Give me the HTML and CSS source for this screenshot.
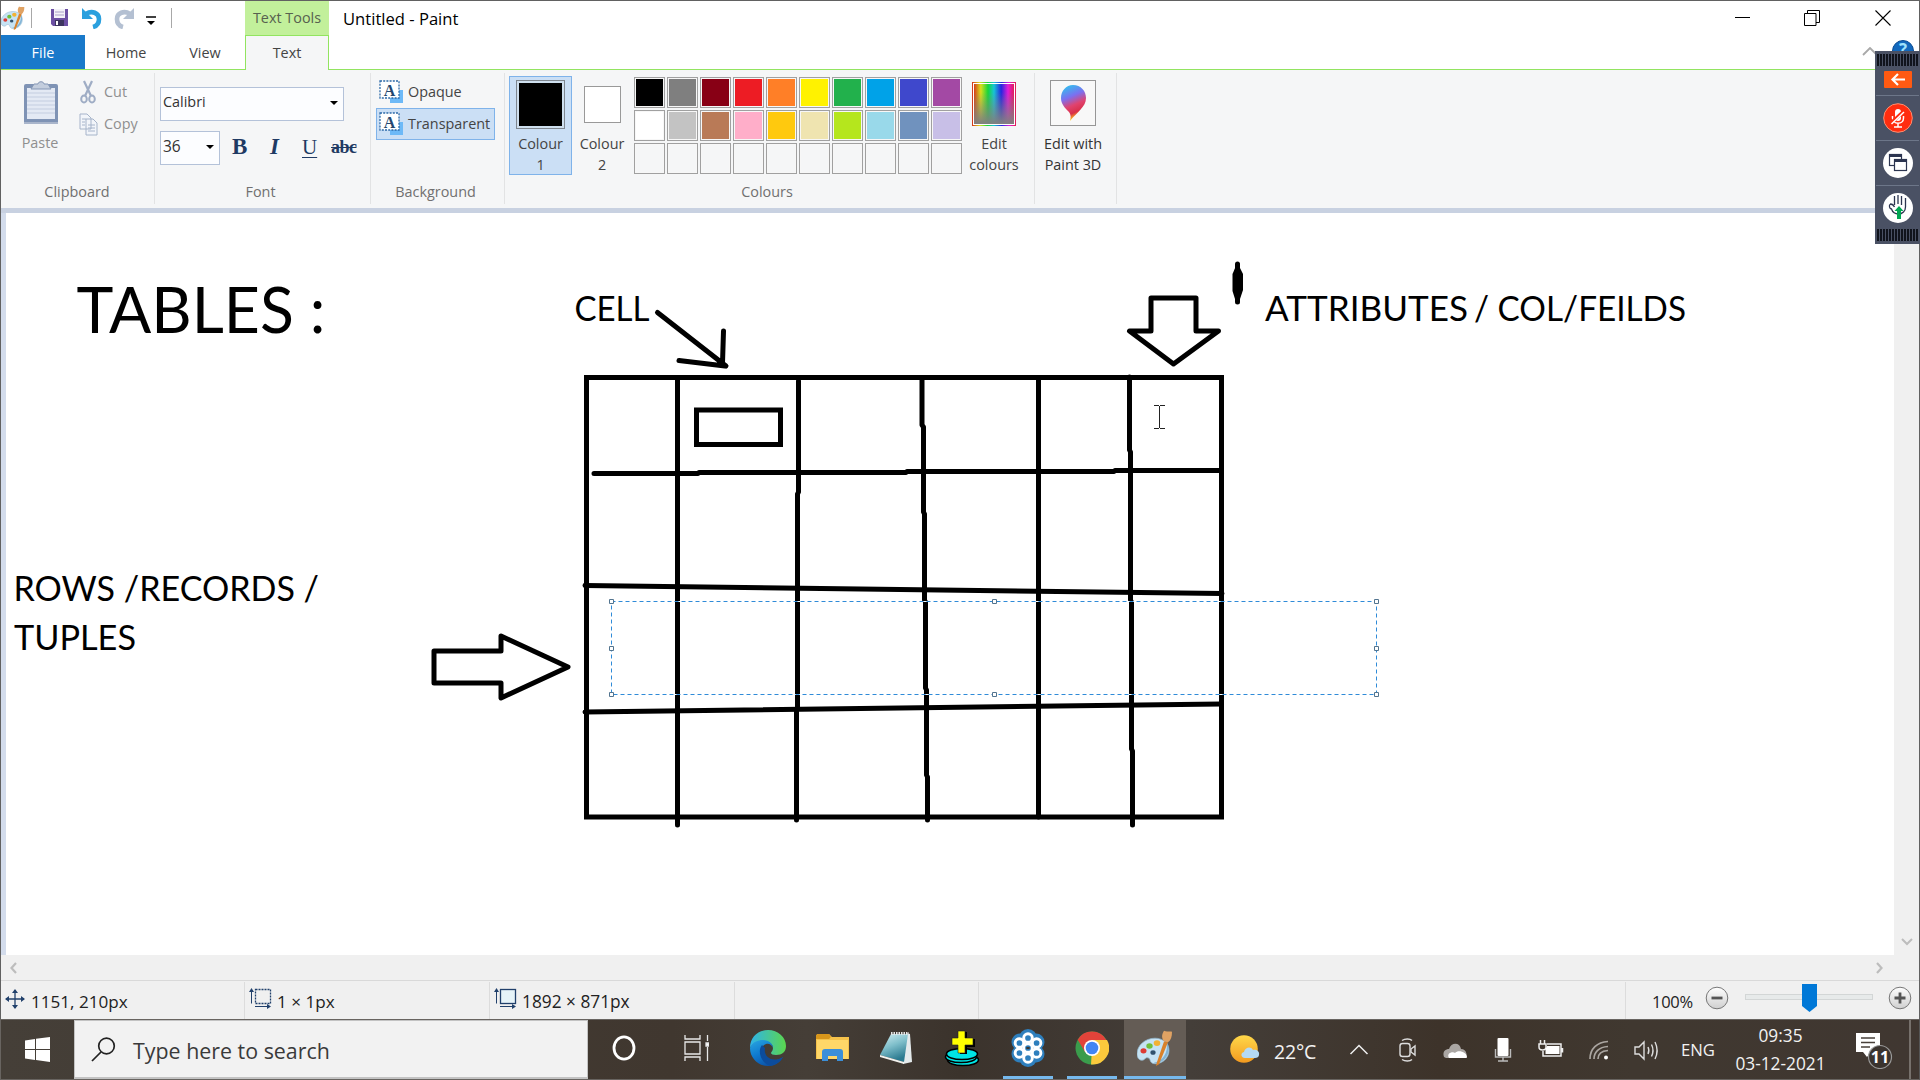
FILE: index.html
```html
<!DOCTYPE html>
<html lang="en">
<head>
<meta charset="utf-8">
<title>Untitled - Paint</title>
<link rel="stylesheet" href="styles.css">
</head>
<body>
<svg class="defs" width="0" height="0" aria-hidden="true">
  <defs>
    <symbol id="palette" viewBox="0 0 36 44">
      <path d="M18 10C8 10 0 19 0 29c0 5 2 8 5 8 3 0 3-4 6-3 3 1 1 5 5 7 8 2 16-6 16-16 0-9-6-15-14-15z" fill="#c6e3f4" stroke="#8fb3c9" stroke-width=".8"/>
      <path d="M30 15c4 9 1 21-8 25-3 1-5 1-5 0 9-2 14-12 13-25z" fill="#83b4d6"/>
      <ellipse cx="20" cy="16" rx="3.300" ry="3.600" fill="#f2b233"/>
      <ellipse cx="12.500" cy="19.500" rx="3.200" ry="3.400" fill="#6fbf3c"/>
      <ellipse cx="6.500" cy="25.500" rx="3" ry="3.200" fill="#dd3b34"/>
      <ellipse cx="16" cy="27.500" rx="2.600" ry="2.900" fill="#31526e"/>
      <path d="M27 14l4 1-9 27-3 2 1-5z" fill="#d9822b"/>
      <path d="M27 14c-3-5-2-9 0-13 3 2 5 0 8 1 0 6-1 10-4 13z" fill="#e0a263"/>
    </symbol>
    <symbol id="textbox" viewBox="0 0 26 24">
      <rect x="11" y="10" width="13" height="13" fill="#6db9f7"/>
      <rect x="1" y="1" width="19" height="17" fill="#fff" stroke="#2c6aa8" stroke-width="1.300" stroke-dasharray="2 1.200"/>
      <text x="10.500" y="16" text-anchor="middle" class="glyph">A</text>
    </symbol>
    <linearGradient id="rainbow"><stop offset="0" stop-color="#d43b1c"/><stop offset=".17" stop-color="#d8e01c"/><stop offset=".35" stop-color="#17d63a"/><stop offset=".5" stop-color="#17c4d6"/><stop offset=".68" stop-color="#2626e0"/><stop offset=".85" stop-color="#e01cd8"/><stop offset="1" stop-color="#e01c5a"/></linearGradient>
    <linearGradient id="greyfade" x2="0" y2="1"><stop offset=".2" stop-color="#808080" stop-opacity="0"/><stop offset="1" stop-color="#808080"/></linearGradient>
    <linearGradient id="drop" x2=".3" y2="1"><stop offset="0" stop-color="#20d2ee"/><stop offset=".4" stop-color="#7b70f0"/><stop offset=".65" stop-color="#e0436f"/><stop offset=".85" stop-color="#d92f4a"/><stop offset="1" stop-color="#ffc61a"/></linearGradient>
    <linearGradient id="edgeblue" x2=".6" y2="1"><stop offset="0" stop-color="#2aa7e0"/><stop offset=".5" stop-color="#0f7bd0"/><stop offset="1" stop-color="#0c4fa3"/></linearGradient>
    <linearGradient id="edgegreen"><stop offset="0" stop-color="#2fb3ea"/><stop offset="1" stop-color="#5bd64e"/></linearGradient>
    <linearGradient id="sun" x2="0" y2="1"><stop offset="0" stop-color="#ffd84a"/><stop offset="1" stop-color="#f39a1f"/></linearGradient>
    <linearGradient id="pad" x2=".4" y2="1"><stop offset="0" stop-color="#d5eff2"/><stop offset=".5" stop-color="#7fbfcb"/><stop offset="1" stop-color="#2b7a90"/></linearGradient>
    <linearGradient id="knob" x2="0" y2="1"><stop offset="0" stop-color="#fff"/><stop offset="1" stop-color="#cfcfcf"/></linearGradient>
  </defs>
</svg>

<div class="window">
  <header class="header">
    <div class="titlebar">
      <div class="quick">
        <svg class="q-app" width="24" height="24" viewBox="0 0 36 44" preserveAspectRatio="none"><use href="#palette"/></svg>
        <i class="q-sep"></i>
        <svg class="q-save" width="17" height="17" viewBox="0 0 17 17"><path d="M0 0h17v17H2l-2-2z" fill="#6c4fa3"/><path d="M3 0h11v9H3z" fill="#f3f1f8"/><path d="M4 3h9M4 6h9" stroke="#aaa0c8"/><path d="M4 11h9v6H4z" fill="#3d3560"/><path d="M5 12h2v4H5z" fill="#fff"/></svg>
        <svg class="q-undo" width="20" height="22" viewBox="0 0 20 22"><path d="M4 7c6-4 13-1 13 5 0 4-2 7-6 8" fill="none" stroke="#2ba0de" stroke-width="4.600"/><path d="M0 1v11h11z" fill="#2ba0de"/></svg>
        <svg class="q-redo" width="20" height="22" viewBox="0 0 20 22"><path d="M16 7C10 3 3 6 3 12c0 4 2 7 6 8" fill="none" stroke="#b4c0d2" stroke-width="4.600"/><path d="M20 1v11H9z" fill="#b4c0d2"/></svg>
        <svg class="q-more" width="10" height="10" viewBox="0 0 10 10"><path d="M0 1h10" stroke="#000" stroke-width="1.500"/><path d="M1 5h8L5 9z"/></svg>
        <i class="q-sep"></i>
      </div>
      <div class="context">Text Tools</div>
      <div class="title">Untitled - Paint</div>
      <div class="caption">
        <svg width="16" height="16" viewBox="0 0 16 16"><path d="M0 7.500h15" stroke="#000"/></svg>
        <svg width="16" height="16" viewBox="0 0 16 16" fill="none" stroke="#000"><path d="M.5 3.500h11.500v12H.5zM3.500 3.500v-3h12v12h-3.500"/></svg>
        <svg width="16" height="16" viewBox="0 0 16 16"><path d="M.5.5l15 15M15.500.5l-15 15" stroke="#000" stroke-width="1.100"/></svg>
      </div>
    </div>
    <nav class="tabs">
      <span class="tab tab-file">File</span>
      <span class="tab tab-home">Home</span>
      <span class="tab tab-view">View</span>
      <span class="tab tab-text">Text</span>
      <span class="tab-fill">
        <svg width="16" height="9" viewBox="0 0 16 9"><path d="M1 8l7-7 7 7" fill="none" stroke="#a9a9a9" stroke-width="1.800"/></svg>
        <svg width="22" height="22" viewBox="0 0 22 22"><circle cx="11" cy="11" r="10.500" fill="#1268bd" stroke="#0b4c92"/><text x="11" y="16" text-anchor="middle" class="help">?</text></svg>
      </span>
    </nav>
  </header>

  <section class="ribbon">
    <div class="group g-clip">
      <div class="body">
        <div class="paste">
          <svg width="36" height="44" viewBox="0 0 36 44"><rect x="1" y="3" width="34" height="40" rx="2" fill="#7f93b5"/><path d="M4 7h28v31H4z" fill="#e3e9f4"/><path d="M4 12h28M4 16h28M4 20h28M4 24h28M4 28h28M4 32h28" stroke="#c3cde0"/><path d="M8 8l3-5h4c0-3 6-3 6 0h4l3 5z" fill="#c3cddd" stroke="#8597b5"/><path d="M1 42h34" stroke="#a9b5cb" stroke-width="2"/></svg>
          <span>Paste</span>
        </div>
        <div class="cutcopy">
          <div class="mini"><svg width="19" height="24" viewBox="0 0 19 24" fill="none" stroke="#9fadc5"><path d="M5 1l7 15M13 1L6 16" stroke-width="2.200"/><ellipse cx="5" cy="19" rx="2.800" ry="3.500" stroke-width="2"/><ellipse cx="13" cy="19" rx="2.800" ry="3.500" stroke-width="2"/></svg>Cut</div>
          <div class="mini"><svg width="19" height="24" viewBox="0 0 19 24" fill="#f2f5fa" stroke="#a6b4ca"><path d="M1 2h7l4 4v11H1zM7 7h7l4 4v12H7z"/><path d="M3 7h4M3 10h3M3 13h3M9 13h7M9 16h7M9 19h7"/></svg>Copy</div>
        </div>
      </div>
      <div class="label">Clipboard</div>
    </div>
    <div class="group g-font">
      <div class="body">
        <div class="combo family">Calibri<i class="arrow"></i></div>
        <div class="fontrow">
          <div class="combo size">36<i class="arrow"></i></div>
          <b class="f-b">B</b><b class="f-i">I</b><span class="f-u">U</span><b class="f-s">abc</b>
        </div>
      </div>
      <div class="label">Font</div>
    </div>
    <div class="group g-back">
      <div class="body">
        <div class="option"><svg width="26" height="24"><use href="#textbox"/></svg>Opaque</div>
        <div class="option on"><svg width="26" height="24"><use href="#textbox"/></svg>Transparent</div>
      </div>
      <div class="label">Background</div>
    </div>
    <div class="group g-colours">
      <div class="body">
        <div class="pick on"><i class="chip chip-1"></i>Colour<br>1</div>
        <div class="pick second"><i class="chip chip-2"></i>Colour<br>2</div>
        <div class="swatches">
          <i style="background:#000"></i><i style="background:#7f7f7f"></i><i style="background:#880015"></i><i style="background:#ed1c24"></i><i style="background:#ff7f27"></i><i style="background:#fff200"></i><i style="background:#22b14c"></i><i style="background:#00a2e8"></i><i style="background:#3f48cc"></i><i style="background:#a349a4"></i>
          <i style="background:#fff"></i><i style="background:#c3c3c3"></i><i style="background:#b97a57"></i><i style="background:#ffaec9"></i><i style="background:#ffc90e"></i><i style="background:#efe4b0"></i><i style="background:#b5e61d"></i><i style="background:#99d9ea"></i><i style="background:#7092be"></i><i style="background:#c8bfe7"></i>
          <i></i><i></i><i></i><i></i><i></i><i></i><i></i><i></i><i></i><i></i>
        </div>
        <div class="tool t-edit"><svg width="44" height="44" viewBox="0 0 44 44"><rect x=".5" y=".5" width="43" height="43" fill="#fff" stroke="url(#rainbow)"/><rect x="2" y="2" width="40" height="40" fill="url(#rainbow)"/><rect x="2" y="2" width="40" height="40" fill="url(#greyfade)"/></svg>Edit<br>colours</div>
      </div>
      <div class="label">Colours</div>
    </div>
    <div class="group g-3d">
      <div class="body">
        <div class="tool"><svg width="46" height="46" viewBox="0 0 46 46"><rect x=".5" y=".5" width="45" height="45" fill="#f8f8f8" stroke="#969696"/><path d="M23 5c8 0 13 6 13 13 0 9-9 14-16 23 1-4 1-6-1-9-4-4-8-8-8-14 0-7 5-13 12-13z" fill="url(#drop)"/></svg>Edit with<br>Paint 3D</div>
      </div>
    </div>
  </section>

  <main class="workspace">
    <svg class="canvas" width="1888" height="742" viewBox="6 213 1888 742">
      <g class="ink">
        <rect x="586.500" y="377.500" width="635" height="439.500"/>
        <rect x="696.500" y="410" width="84" height="34.500"/>
      </g>
      <g class="ink round">
        <path d="M1151 298h45v33h22.500L1173.500 364 1129.500 331H1151z"/>
        <path d="M434 651h67v-15l67 31-67 31v-15h-67z"/>
        <path d="M677.500 378V825M798.500 381V492L797.500 494V708L796.500 710V820M922 378V425L923.500 427V512L924.500 514V600L925.500 602V688L926.500 690V775L927.500 777V820M1038.500 378V817M1129.500 377V450L1130.500 452V600L1131.500 602V749L1132.500 751V825"/>
        <path d="M594 473.500H698L699 472.500H906L907 471.500H1114L1115 470.500H1220"/>
        <path d="M585 585.500L1222 593.500M585 712L1221 704"/>
        <path d="M657.500 312.500L726 366M679 360.500L725 366M723.500 331L722.500 363"/>
        <path d="M1237.500 264V302"/>
      </g>
      <path d="M1232.500 274l3-7h4l3.500 7v16l-3 9h-5l-2.500-8z"/>
      <g class="written">
        <text x="76.500" y="333" font-size="64" textLength="249" lengthAdjust="spacingAndGlyphs">TABLES :</text>
        <text x="574.500" y="321" font-size="34.500" textLength="75" lengthAdjust="spacingAndGlyphs">CELL</text>
        <text x="1265" y="321" font-size="34.500" textLength="203" lengthAdjust="spacingAndGlyphs">ATTRIBUTES</text>
        <text x="1474" y="321" font-size="34.500" textLength="212" lengthAdjust="spacingAndGlyphs">/ COL/FEILDS</text>
        <text x="13.500" y="600.500" font-size="34.500" textLength="305.500" lengthAdjust="spacingAndGlyphs">ROWS /RECORDS /</text>
        <text x="14" y="649.500" font-size="34.500" textLength="122" lengthAdjust="spacingAndGlyphs">TUPLES</text>
      </g>
      <rect x="611.500" y="601.500" width="765" height="93" fill="none" stroke="#fff"/>
      <rect x="611.500" y="601.500" width="765" height="93" fill="none" stroke="#2f8bd8" stroke-dasharray="4 3"/>
      <path class="handles" d="M609.500 599.500h4v4h-4zM992.500 599.500h4v4h-4zM1374.500 599.500h4v4h-4zM609.500 646.500h4v4h-4zM1374.500 646.500h4v4h-4zM609.500 692.500h4v4h-4zM992.500 692.500h4v4h-4zM1374.500 692.500h4v4h-4z"/>
      <path d="M1154 405.500h5M1160 405.500h5M1159.500 406v22M1154 428.500h5M1160 428.500h5" stroke="#222" fill="none"/>
    </svg>
    <div class="vscroll"><svg width="14" height="9" viewBox="0 0 14 9"><path d="M2 2l5 5 5-5" fill="none" stroke="#bdbdbd" stroke-width="2"/></svg></div>
    <div class="hscroll">
      <svg width="9" height="14" viewBox="0 0 9 14"><path d="M7 2L2.500 7 7 12" fill="none" stroke="#bdbdbd" stroke-width="2.200"/></svg>
      <svg width="9" height="14" viewBox="0 0 9 14"><path d="M2 2l4.500 5L2 12" fill="none" stroke="#bdbdbd" stroke-width="2.200"/></svg>
    </div>
  </main>

  <footer class="status">
    <div class="cell c1"><svg width="20" height="20" viewBox="0 0 20 20"><path d="M10 1v18M1 10h18" stroke="#21406b" stroke-width="1.300"/><path d="M10 0l3 4H7zM10 20l3-4H7zM0 10l4-3v6zM20 10l-4-3v6z" fill="#21406b"/></svg>1151, 210px</div>
    <div class="cell c2"><svg width="23" height="21" viewBox="0 0 23 21" fill="none" stroke="#21406b"><rect x="6.500" y="1.500" width="15" height="14" stroke-dasharray="2 1" stroke-width="1.300"/><path d="M2.500 2v13.500M6 18.500h13"/><path d="M2.500 0l2.500 4H0zM22 18.500l-4-2.500v5z" fill="#21406b" stroke="none"/></svg>1 × 1px</div>
    <div class="cell c3"><svg width="23" height="21" viewBox="0 0 23 21" fill="none" stroke="#21406b"><rect x="6.500" y="1.500" width="15" height="14" fill="#e6f3f8" stroke-width="1.300"/><path d="M2.500 2v13.500M6 18.500h13"/><path d="M2.500 0l2.500 4H0zM22 18.500l-4-2.500v5z" fill="#21406b" stroke="none"/></svg>1892 × 871px</div>
    <div class="cell c4"></div>
    <div class="cell c5"></div>
    <div class="zoom">
      <span>100%</span>
      <svg width="24" height="24" viewBox="0 0 24 24"><circle cx="12" cy="12" r="10.800" fill="url(#knob)" stroke="#777"/><path d="M6.500 12h11" stroke="#555" stroke-width="2.800"/></svg>
      <svg class="slider" width="128" height="30" viewBox="0 0 128 30"><rect x=".5" y="11.500" width="127" height="5" fill="#e7eaea" stroke="#d3d6d6"/><path d="M57 1h15v22l-7.500 6L57 23z" fill="#0078d7"/></svg>
      <svg width="24" height="24" viewBox="0 0 24 24"><circle cx="12" cy="12" r="10.800" fill="url(#knob)" stroke="#777"/><path d="M6.500 12h11M12 6.500v11" stroke="#555" stroke-width="2.800"/></svg>
    </div>
  </footer>
</div>

<div class="taskbar">
  <div class="start"><svg width="25" height="25" viewBox="0 0 25 25"><path d="M0 3.500l10-1.600v10H0zM11 1.700L25 0v11.900H11zM0 13h10v9.900L0 21.500zM11 13h14v12l-14-1.900z" fill="#fff"/></svg></div>
  <div class="search"><svg width="25" height="25" viewBox="0 0 25 25" fill="none" stroke="#222" stroke-width="1.700"><circle cx="15.500" cy="9" r="7.800"/><path d="M10 15L1 24"/></svg><span>Type here to search</span></div>
  <div class="apps">
    <div class="app"><svg width="24" height="26" viewBox="0 0 24 26"><ellipse cx="12" cy="13" rx="10" ry="11.200" fill="none" stroke="#fff" stroke-width="2.800"/></svg></div>
    <div class="app a-view"><svg width="25" height="26" viewBox="0 0 25 26" fill="none" stroke="#e8e8e8" stroke-width="1.300"><path d="M1 0v4h15V0M1 26v-4h15v4M1 7h15v12H1zM23.500 0v6M23.500 12v14"/><path d="M22 8h3v3h-3z" fill="#fff"/></svg></div>
    <div class="app"><svg width="38" height="38" viewBox="0 0 38 38"><path d="M1 19C1 8 9 1 19 1s18 7 18 16c0 6-4 9-10 9-3 0-5-1-5-2s2-2 2-5c0-4-4-7-9-7C9 12 3 15 1 19z" fill="url(#edgegreen)"/><path d="M1 19c2-6 8-8 13-8 6 0 10 4 10 8-1-3-4-5-7-4-7 2-5 14 5 16 5 1 9-1 12-3-3 6-9 9-15 9C9 37 1 29 1 19z" fill="url(#edgeblue)"/><path d="M13 16c-5 6-1 18 8 21 6-1 10-4 13-9-9 6-20 1-18-9z" fill="#0c4c9c"/></svg></div>
    <div class="app"><svg width="33" height="28" viewBox="0 0 33 28"><path d="M0 3c0-2 1-3 2-3h11l3 3h17v22H0z" fill="#f5c24b"/><path d="M0 4V2c0-1 1-2 2-2h11l2 3-2 2H0z" fill="#d8961b"/><path d="M1 6h31v19H1z" fill="#ffd768"/><path d="M6 27V18c0-2 1-3 3-3h15c2 0 3 1 3 3v9h-6v-5h-9v5z" fill="#3b8fd8"/></svg></div>
    <div class="app"><svg width="34" height="34" viewBox="0 0 34 34"><path d="M27 2l4 1 2 28-9 2z" fill="#e4eaec"/><path d="M12 3l17 0-4 28L1 24z" fill="url(#pad)"/><path d="M1 24l24 7v2L1 26z" fill="#f2f2ee"/><path d="M12 2.500h18" stroke="#e6e6e6" stroke-width="3" stroke-dasharray="1.500 1"/></svg></div>
    <div class="app a-plus"><svg width="36" height="38" viewBox="0 0 36 38"><g fill="#00e5e5" stroke="#000" stroke-width="1.600"><ellipse cx="19" cy="31" rx="15.500" ry="5.500"/><ellipse cx="17" cy="28" rx="15.500" ry="5.500"/><ellipse cx="18" cy="25" rx="15.500" ry="5.500"/></g><path d="M16 3h7v7h8v8h-8v7h-7z" fill="#000"/><path d="M14 2h7v7h8v7h-8v8h-7v-8H8V9h6z" fill="#ff0" stroke="#222" stroke-width=".6"/></svg></div>
    <div class="app run shift"><svg width="34" height="38" viewBox="0 0 34 38"><g fill="#2e7fbd"><circle cx="17" cy="9" r="9"/><circle cx="9" cy="13" r="8.500"/><circle cx="25" cy="13" r="8.500"/><circle cx="9" cy="25" r="8.500"/><circle cx="25" cy="25" r="8.500"/><circle cx="17" cy="29" r="9"/></g><g fill="none" stroke="#fff" stroke-width="2.900"><circle cx="17" cy="9" r="4.300"/><circle cx="25.600" cy="14" r="4.300"/><circle cx="25.600" cy="24" r="4.300"/><circle cx="17" cy="29" r="4.300"/><circle cx="8.400" cy="24" r="4.300"/><circle cx="8.400" cy="14" r="4.300"/><circle cx="17" cy="19" r="4.300"/></g></svg></div>
    <div class="app run"><svg width="34" height="34" viewBox="0 0 34 34"><circle cx="17" cy="17" r="16.500" fill="#3a9c4c"/><path d="M17 17l-1 16.500A16.500 16.500 0 0 0 32 9H17z" fill="#fbc93c"/><path d="M17 17L2.700 8.700A16.500 16.500 0 0 1 31.400 9H17z" fill="#e2433a"/><path d="M2.700 8.700L10 21l7-12z" fill="#e2433a"/><circle cx="17" cy="17" r="8" fill="#fff"/><circle cx="17" cy="17" r="6.300" fill="#4285f4"/></svg></div>
    <div class="app run active"><svg width="36" height="36" viewBox="0 0 36 44" preserveAspectRatio="none"><use href="#palette"/></svg></div>
  </div>
  <div class="tray">
    <div class="w-icon"><svg width="30" height="30" viewBox="0 0 30 30"><circle cx="14" cy="14" r="13.800" fill="url(#sun)"/><path d="M15 23c-4 0-5-5-1-6 1-5 7-6 9-2 3-1 7 1 6 5 0 2-2 3-4 3z" fill="#b4daf5"/></svg></div>
    <div class="w-text">22°C</div>
    <svg width="48" height="30" viewBox="0 0 48 30" fill="none" stroke="#eee" stroke-width="1.500"><path d="M15.500 19L24 10.500 32.500 19"/></svg>
    <svg width="48" height="30" viewBox="0 0 48 30" fill="none" stroke="#ddd" stroke-width="1.400"><rect x="17" y="8.500" width="10" height="13" rx="2.500"/><path d="M28 14l4-3v9l-4-3zM19 5.500c3-2 8-2 10 0M19 24.500c3 2 8 2 10 0"/></svg>
    <svg width="48" height="30" viewBox="0 0 48 30"><path d="M13 22c-2-6 2-8 5-8 2-7 11-7 12 0 6 0 7 8 4 9H15z" fill="#aaa6a3"/><path d="M18 23c-3-5 4-7 6-5 3-4 12-1 12 4 0 1-1 1-2 1z" fill="#fff"/></svg>
    <svg width="48" height="30" viewBox="0 0 48 30"><rect x="18.500" y="3" width="11" height="18" rx="1" fill="#fff"/><path d="M16.500 14v8h15v-8M24 22v4M19 26h10" fill="none" stroke="#bbb" stroke-width="1.400"/></svg>
    <svg width="48" height="30" viewBox="0 0 48 30" fill="none" stroke="#eee" stroke-width="1.500"><path d="M20 9h14v12H16v-5M35.500 13v4.500M12 9h7v3c0 4-7 4-7 0zM13.500 5v4M17.500 5v4"/><path d="M20 11h12.500v8H18.500v-5z" fill="#fff" stroke="none"/></svg>
    <svg width="48" height="30" viewBox="0 0 48 30" fill="none" stroke="#aaa5a0" stroke-width="1.700"><path d="M15 24C15 14 22 7 33 6.500M19 24c0-7 5-12 14-12.500M23 24c0-5 3-8 10-8.500" /><circle cx="31" cy="22.500" r="2" fill="#fff" stroke="none"/></svg>
    <svg width="48" height="30" viewBox="0 0 48 30" fill="none" stroke="#ddd" stroke-width="1.400"><path d="M12 12h4l5-5v17l-5-5h-4zM25 12c1 2 1 5 0 7M28.500 9.500c2 4 2 8 0 12M32 7c3 6 3 11 0 17"/></svg>
    <div class="lang">ENG</div>
    <div class="clock">09:35<br>03-12-2021</div>
    <div class="notify"><svg width="38" height="38" viewBox="0 0 38 38"><path d="M0 2h24v19h-9l-4 5-4-5H0z" fill="#fff"/><path d="M5 7h14M5 11.500h14M5 16h9" stroke="#48403a" stroke-width="1.500"/><circle cx="24" cy="26" r="11.500" fill="#3a332e" stroke="#999" stroke-width="1.200"/><text x="24" y="32" text-anchor="middle" class="count">11</text></svg></div>
    <i class="peek"></i>
  </div>
</div>

<aside class="dock">
  <i class="grip"></i>
  <div class="d-item d-back"><svg width="28" height="17" viewBox="0 0 28 17"><rect width="28" height="17" rx="1" fill="#ff5a12"/><path d="M21 8.500H9M14 3L8.500 8.500 14 14" fill="none" stroke="#fff" stroke-width="2.200"/></svg></div>
  <div class="d-item"><svg width="30" height="30" viewBox="0 0 30 30"><circle cx="15" cy="15" r="14.300" fill="#ff2d0f" stroke="#ff8e70"/><rect x="12" y="6" width="6" height="12" rx="3" fill="#fff"/><path d="M9.500 13v2c0 7 11 7 11 0v-2M15 20v4M11 24h8" fill="none" stroke="#fff" stroke-width="1.500"/><path d="M8 20L21 8" stroke="#ff2d0f" stroke-width="3.500"/><path d="M8.500 21L21 9" stroke="#fff" stroke-width="1.500"/></svg></div>
  <div class="d-item"><svg width="30" height="30" viewBox="0 0 30 30"><circle cx="15" cy="15" r="15" fill="#fff"/><g fill="#fff" stroke="#2c3550" stroke-width="1.200"><rect x="6.500" y="6.500" width="12" height="11"/><path d="M6.500 8h12" stroke-width="2"/><rect x="11.500" y="11.500" width="12" height="11"/><path d="M11.500 13h12" stroke-width="2"/></g></svg></div>
  <div class="d-item"><svg width="30" height="30" viewBox="0 0 30 30"><circle cx="15" cy="15" r="15" fill="#fff"/><path d="M11.500 12V3M15 11V2M18.500 12V3M22.500 5v9c0 4-3 7-7 7s-6-2-7-5c-2 0-3-4-1-5 2 0 3 1 4 3" fill="none" stroke="#2c3550" stroke-width="1.300"/><path d="M14 26v-8h-2.500l4.500-5 4.500 5H18v8z" fill="#00a651"/></svg></div>
  <i class="grip"></i>
</aside>
</body>
</html>
```
FILE: styles.css
```css
* { box-sizing: border-box; }
body {
  margin: 0;
  width: 1920px;
  height: 1080px;
  overflow: hidden;
  position: relative;
  background: #fff;
  color: #444;
  font: 14.4px/22px "Open Sans", "Noto Sans", sans-serif;
}
svg { display: block; flex: none; }
i { display: block; font-style: normal; }
.defs { position: absolute; }

.window {
  height: 1019px;
  display: flex;
  flex-direction: column;
  border: 1px solid #616161;
  border-width: 1px 1px 0;
}

/* title row and tabs */
.titlebar { display: flex; height: 34px; }
.quick { width: 244px; display: flex; align-items: center; padding-bottom: 1px; }
.q-sep { width: 1px; height: 20px; background: #a8a8a8; margin-left: 6px; }
.q-save { margin-left: 19px; }
.q-undo { margin-left: 14px; }
.q-redo { margin-left: 12px; }
.q-more { margin: 6px 0 0 12px; }
.q-more + .q-sep { margin-left: 15px; }
.context { width: 84px; background: #c2f09b; color: #57614f; text-align: center; line-height: 34px; }
.title { margin-left: 14px; font-size: 16.600px; line-height: 35px; color: #000; flex: 1; }
.caption { display: flex; gap: 54px; padding: 9px 28px 0 0; }
.caption svg:nth-child(2) { margin-left: -1px; margin-right: 1px; }
.tabs { display: flex; height: 35px; line-height: 35px; text-align: center; }
.tab, .tab-fill { border-bottom: 1px solid #92e460; }
.tab-file { width: 84px; background: #1979ca; color: #fff; }
.tab-home { width: 82px; }
.tab-view { width: 78px; padding-right: 2px; }
.tab-text { width: 84px; background: #f5f6f7; border: 1px solid #92e460; border-bottom: 0; line-height: 33px; }
.tab-fill { flex: 1; height: 35px; display: flex; justify-content: flex-end; gap: 14px; padding: 6px 5px 0 0; }
.tab-fill svg:first-child { margin-top: 6px; }
.tab-fill svg:last-child { margin-top: -1px; }
.help { font: bold 17px "Open Sans", sans-serif; fill: #9fe1fb; }

/* ribbon */
.ribbon { height: 143px; display: flex; background: #f5f6f7; border-bottom: 5px solid #c8d1e1; padding: 3px 0 4px; }
.group { display: flex; flex-direction: column; border-right: 1px solid #e2e3e4; }
.group .body { height: 109px; }
.label { text-align: center; line-height: 24px; color: #707070; }
.g-clip { width: 154px; color: #8f8f8f; }
.g-clip .body { display: flex; padding: 8px 0 0 22px; }
.g-clip .label { padding-right: 1px; }
.paste { width: 36px; display: flex; flex-direction: column; align-items: center; gap: 7px; }
.paste span { margin-left: -2px; }
.cutcopy { margin-left: 20px; margin-top: -3px; }
.mini { display: flex; align-items: center; gap: 6px; height: 32px; margin-top: 2px; }
.mini:first-child { margin: 0; height: 28px; }
.g-font { width: 216px; }
.g-font .body { padding: 14px 0 0 5px; }
.g-font .label { padding-right: 4px; }
.combo { height: 34px; border: 1px solid #b4c2d9; background: #fcfdff; padding: 0 5px 4px 2px; display: flex; justify-content: space-between; align-items: center; color: #333; }
.family { width: 184px; }
.arrow { border: 4px solid transparent; border-top-color: #000; border-bottom: 0; margin-top: 2px; }
.fontrow { display: flex; align-items: center; margin-top: 10px; font-family: "Liberation Serif", serif; font-size: 23px; color: #1f3a63; }
.size { width: 60px; font-size: 15.500px; font-family: "Open Sans", sans-serif; }
.f-b, .f-i, .f-u, .f-s { margin-top: -2px; }
.f-b { margin-left: 12px; width: 38px; }
.f-i { font-style: italic; width: 32px; }
.f-u { text-decoration: underline; text-underline-offset: 3px; text-decoration-thickness: 1px; width: 29px; font-size: 21px; }
.f-s { text-decoration: line-through; font-size: 18px; letter-spacing: -.5px; }
.g-back { width: 134px; }
.g-back .body { padding: 3px 9px 0 5px; }
.g-back .label { padding-right: 4px; }
.option { height: 32px; display: flex; align-items: center; gap: 3px; padding-left: 2px; border: 1px solid transparent; line-height: 24px; }
.option.on { background: #cbdff5; border-color: #7fb3ea; }
.glyph { font: bold 16px "Liberation Serif", serif; fill: #24476f; }
.g-colours { width: 530px; }
.g-colours .body { display: flex; padding: 3px 0 0 4px; }
.g-colours .label { padding-right: 5px; }
.pick { width: 63px; height: 99px; border: 1px solid transparent; text-align: center; line-height: 21px; }
.pick.on { background: #cbdff5; border-color: #7fb3ea; }
.second { width: 61px; margin-right: 2px; padding-right: 1px; }
.chip { border: 1px solid #8a8f94; }
.chip-1 { width: 49px; height: 49px; margin: 3px auto 4px; background: #000; border-color: #7f8790; box-shadow: inset 0 0 0 2px #cfdfee; }
.chip-2 { width: 37px; height: 37px; margin: 9px auto 10px; background: #fff; border-color: #999; }
.swatches { display: grid; grid-template-columns: repeat(10, 31px); grid-auto-rows: 31px; gap: 2px; margin: 1px 0 0 -1px; }
.swatches i { border: 1px solid #a0a0a0; box-shadow: inset 0 0 0 1px #f7f7f7; }
.tool { display: flex; flex-direction: column; align-items: center; text-align: center; line-height: 21px; }
.t-edit { margin: 6px 0 0 5px; width: 54px; }
.tool svg { margin-bottom: 7px; }
.g-3d { width: 82px; }
.g-3d .body { padding: 7px 5px 0 0; }
.g-3d .tool { color: #333; }

/* drawing area */
.workspace { display: grid; grid-template: 742px 25px / 1888px 25px; padding-left: 5px; background: #d3dcec; height: 767px; }
.canvas { background: #fff; }
.ink { fill: none; stroke: #000; stroke-width: 5; }
.round { stroke-linecap: round; stroke-linejoin: round; }
.written { font-family: Lato, sans-serif; fill: #000; }
.handles { fill: #fff; stroke: #52748f; }
.vscroll { background: #f0f0f0; display: flex; align-items: flex-end; justify-content: center; padding-bottom: 9px; }
.hscroll { grid-column: 1 / 3; margin-left: -5px; background: #f0f0f0; display: flex; justify-content: space-between; align-items: center; padding: 0 35px 0 8px; }

/* status bar */
.status { height: 39px; display: flex; background: #f0f0f0; border-top: 1px solid #d9d9d9; padding-top: 1px; font-size: 17.100px; color: #222; }
.cell { display: flex; align-items: center; gap: 6px; border-right: 1px solid #dcdcdc; padding: 2px 0 0 4px; }
.cell svg { margin-top: -6px; }
.c1 { width: 244px; }
.c2, .c3 { width: 245px; gap: 5px; }
.c3 { font-size: 17.300px; }
.c4 { width: 244px; }
.c5 { width: 647px; }
.zoom { flex: 1; display: flex; align-items: center; padding: 2px 0 0 26px; font-size: 16.500px; }
.zoom svg { margin-top: -7px; }
.zoom span { width: 53px; letter-spacing: -.3px; }
.zoom .slider { margin: -8px 15px 0 16px; }

/* taskbar */
.taskbar { height: 61px; display: flex; background: linear-gradient(90deg, #453f38, #40372f 35%, #453e37 42%, #3b332c 50%, #443e39 62%, #3d332a 75%, #403830 85%, #403731); border: 1px solid #686460; border-right-color: #555; color: #f2f2f2; }
.start { width: 73px; display: flex; align-items: center; justify-content: center; }
.search { width: 514px; background: #f2f2f2; border: 2px solid #c3c3c3; border-width: 1px 1px 2px; display: flex; align-items: center; gap: 17px; padding-left: 16px; color: #3a3a3a; font-size: 21.400px; }
.search span { padding-top: 3px; }
.apps { display: flex; margin-left: 4px; }
.app { width: 64px; display: flex; align-items: center; justify-content: center; border-bottom: 3px solid transparent; }
.a-view { margin: 0 8px; }
.a-plus { padding-left: 3px; }
.shift { margin-left: 4px; }
.run { border-image: linear-gradient(90deg, transparent 7px, #76b9ed 7px 57px, transparent 57px) 0 0 3 0; }
.run.active { width: 62px; background: #645c55; border-image: none; border-color: #76b9ed; }
.tray { display: flex; align-items: center; flex: 1; font-size: 17.300px; }
.w-icon { width: 48px; margin-left: 35px; display: flex; justify-content: center; }
.w-text { width: 66px; padding-left: 5px; font-size: 19.500px; letter-spacing: -.2px; padding-top: 5px; }
.lang { width: 53px; padding-left: 10px; font-size: 16.700px; padding-top: 1px; }
.clock { width: 112px; text-align: center; line-height: 28px; padding: 1px 0 0 1px; }
.notify { margin-left: 20px; width: 38px; }
.count { font: bold 16px "Open Sans", sans-serif; fill: #fff; }
.peek { width: 2px; height: 59px; background: #77716c; margin-left: 15px; }

/* floating meeting controls */
.dock { position: absolute; left: 1875px; top: 51px; width: 45px; height: 193px; padding: 3px 1px 0 1px; background: #4a5164; }
.grip { height: 12px; background: repeating-linear-gradient(90deg, #10131c 0 2px, #4a5164 2px 3px); margin-left: 1px; }
.d-item { height: 45px; border-top: 1px solid #6d7689; display: flex; align-items: center; justify-content: center; }
.d-back { height: 29px; border-top: 0; padding-bottom: 2px; }
.dock .grip:last-child { margin-top: -1px; }
```
